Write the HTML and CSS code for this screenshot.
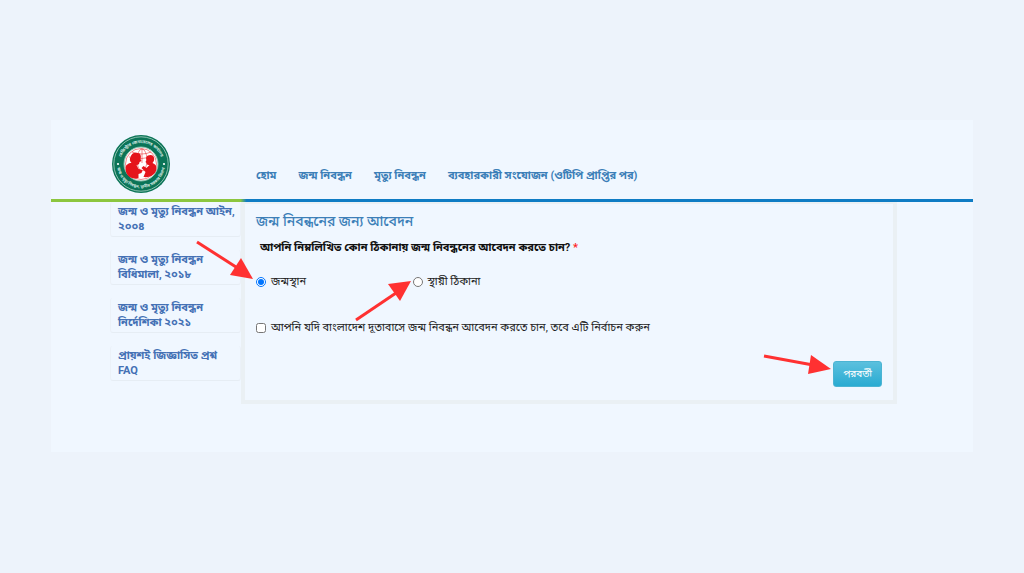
FILE: index.html
```html
<!DOCTYPE html>
<html lang="bn">
<head>
  <meta charset="UTF-8">
  <meta name="viewport" content="width=device-width, initial-scale=1">
  <title>জন্ম নিবন্ধনের জন্য আবেদন</title>
  <link rel="stylesheet" href="styles.css">
</head>
<body>
  <div class="page">
    <header class="header">
      <a href="#" class="logo" aria-label="রেজিস্ট্রার জেনারেলের কার্যালয়">
        <svg width="60" height="60" viewBox="0 0 60 60">
          <defs>
            <path id="topArc" d="M9 30a21 21 0 0 1 42 0"/>
            <path id="bottomArc" d="M6 30a24 24 0 0 0 48 0"/>
          </defs>
          <circle cx="30" cy="30" r="29" fill="#0b7457"/>
          <circle cx="30" cy="30" r="27.2" fill="none" stroke="#a9d2c4" stroke-width="0.8"/>
          <circle cx="30" cy="30" r="17" fill="#fff" stroke="#8fc0ad" stroke-width="1"/>
          <g fill="none" stroke="#e5141b" stroke-width="0.5">
            <circle cx="30" cy="30" r="15.5"/>
            <ellipse cx="31" cy="26" rx="5" ry="11"/>
            <path d="M31 15v14M21 18q10 4 19 0M18 23q13 3 24 0"/>
          </g>
          <path fill="#e5141b" d="M14.500 34c0-3 3-5 6-5-2-2-2-4-1-6 1-4 4-5 7-4 3 0 4 3 3 6l1 2-2 1c0 2-1 3-3 3l2 4 4 1-1 3-3 1v4c-7 2-13-2-13-10z"/>
          <path fill="#e5141b" d="M45.500 34c0-3-2-4-4-5 3-3 2-8-2-8-4 0-5 3-4 5l-1 2 1 1c0 2 2 2 3 2l-3 3-3-2-2 2 3 3 1 1-2 5c7 1 13-3 13-9z"/>
          <text class="seal-text"><textPath href="#topArc" startOffset="50%" text-anchor="middle">রেজিস্ট্রার জেনারেলের কার্যালয়</textPath></text>
          <text class="seal-text"><textPath href="#bottomArc" startOffset="50%" text-anchor="middle">জন্ম ও মৃত্যু নিবন্ধন, স্থানীয় সরকার বিভাগ</textPath></text>
          <circle cx="7" cy="30" r="1.100" fill="#fff"/>
          <circle cx="53" cy="30" r="1.100" fill="#fff"/>
        </svg>
      </a>
      <nav class="nav">
        <a href="#">হোম</a>
        <a href="#">জন্ম নিবন্ধন</a>
        <a href="#">মৃত্যু নিবন্ধন</a>
        <a href="#">ব্যবহারকারী সংযোজন (ওটিপি প্রাপ্তির পর)</a>
      </nav>
    </header>

    <div class="content">
      <aside class="sidebar">
        <a href="#">জন্ম ও মৃত্যু নিবন্ধন আইন, ২০০৪</a>
        <a href="#">জন্ম ও মৃত্যু নিবন্ধন বিধিমালা, ২০১৮</a>
        <a href="#">জন্ম ও মৃত্যু নিবন্ধন নির্দেশিকা ২০২১</a>
        <a href="#">প্রায়শই জিজ্ঞাসিত প্রশ্ন FAQ</a>
      </aside>

      <form class="panel">
        <h1>জন্ম নিবন্ধনের জন্য আবেদন</h1>
        <p class="question" id="question">আপনি নিম্নলিখিত কোন ঠিকানায় জন্ম নিবন্ধনের আবেদন করতে চান? <span class="required">*</span></p>
        <div class="choices" role="radiogroup" aria-labelledby="question">
          <div class="choice">
            <input type="radio" name="address" id="birthPlace" checked>
            <label for="birthPlace">জন্মস্থান</label>
            <svg class="arrow arrow-birth" width="58" height="42" viewBox="0 0 58 42">
              <path d="M1 2L40 27" stroke="#ff3131" stroke-width="3"/>
              <path d="M57 39L34 35L45 18Z" fill="#ff3131"/>
            </svg>
          </div>
          <div class="choice">
            <input type="radio" name="address" id="permanent">
            <label for="permanent">স্থায়ী ঠিকানা</label>
            <svg class="arrow arrow-permanent" width="58" height="42" viewBox="0 0 58 42">
              <path d="M1 40L41 13" stroke="#ff3131" stroke-width="3"/>
              <path d="M56 1L45 21L33 4Z" fill="#ff3131"/>
            </svg>
          </div>
        </div>
        <div class="choice">
          <input type="checkbox" id="embassy">
          <label for="embassy">আপনি যদি বাংলাদেশ দূতাবাসে জন্ম নিবন্ধন আবেদন করতে চান, তবে এটি নির্বাচন করুন</label>
        </div>
        <div class="actions">
          <button type="button">পরবর্তী</button>
          <svg class="arrow arrow-next" width="70" height="22" viewBox="0 0 70 22">
            <path d="M1 2L50 11" stroke="#ff3131" stroke-width="3"/>
            <path d="M68 15L45 20L48 1Z" fill="#ff3131"/>
          </svg>
        </div>
      </form>
    </div>
  </div>
</body>
</html>
```
FILE: styles.css
```css
* {
  box-sizing: border-box;
}

body {
  margin: 0;
  padding: 120px 51px;
  background: #edf3fb;
  font-family: Roboto, "Noto Sans Bengali", "Noto Sans", sans-serif;
  font-size: 11px;
  color: #222;
}

a {
  text-decoration: none;
}

.page {
  background: #f0f7ff;
  padding-bottom: 48px;
}

.header {
  display: flex;
  align-items: flex-end;
  height: 82px;
  padding-left: 60px;
  border-bottom: 3px solid;
  border-image: linear-gradient(to right, #8cc63f 190px, #0f7cc4 196px) 1;
}

.logo {
  width: 145px;
  height: 60px;
  margin-bottom: 5px;
}

.logo svg {
  display: block;
}

.seal-text {
  font-size: 4px;
  font-weight: bold;
  fill: #d5e9e2;
}

.nav {
  display: flex;
  gap: 22px;
  padding-bottom: 13px;
}

.nav a {
  color: #3c7fb8;
  font-weight: bold;
  line-height: 20px;
}

.content {
  display: flex;
  padding: 0 76px 0 59px;
}

.sidebar {
  display: flex;
  flex-direction: column;
  gap: 13px;
  width: 131px;
}

.sidebar a {
  padding: 2px 3px 2px 7px;
  border: 1px solid #ebf1f8;
  border-top: none;
  border-bottom-color: #e6edf4;
  border-radius: 3px;
  color: #4471b5;
  font-weight: bold;
  line-height: 15px;
}

.panel {
  flex: 1;
  padding: 6px 11px 13px;
  border: 4px solid #eaf0f4;
  border-top: 2px solid #eaf0f4;
}

h1 {
  margin: 0;
  color: #3c7fb8;
  font-size: 14px;
  font-weight: 500;
  line-height: 22px;
}

.question {
  margin: 5px 4px 13px;
  color: #111;
  font-weight: bold;
  line-height: 22px;
}

.required {
  color: #ff1e1e;
}

.choices {
  display: grid;
  grid-template-columns: 1fr 3fr;
  margin-bottom: 26px;
}

.choice {
  display: flex;
  align-items: center;
  gap: 5px;
  position: relative;
  line-height: 20px;
}

.choice input {
  width: 10px;
  height: 10px;
  margin: 0;
}

.actions {
  display: flex;
  justify-content: flex-end;
  position: relative;
  margin-top: 23px;
}

button {
  height: 26px;
  padding: 0 9px;
  border: 1px solid #4bb4d3;
  border-radius: 3px;
  background: linear-gradient(#5bc0de, #2aabd2);
  color: #fff;
  font-family: inherit;
  font-size: 10px;
}

.arrow {
  position: absolute;
}

.arrow-birth {
  top: -32px;
  left: -60px;
}

.arrow-permanent {
  top: 8px;
  left: -58px;
}

.arrow-next {
  top: -7px;
  right: 49px;
}
```
